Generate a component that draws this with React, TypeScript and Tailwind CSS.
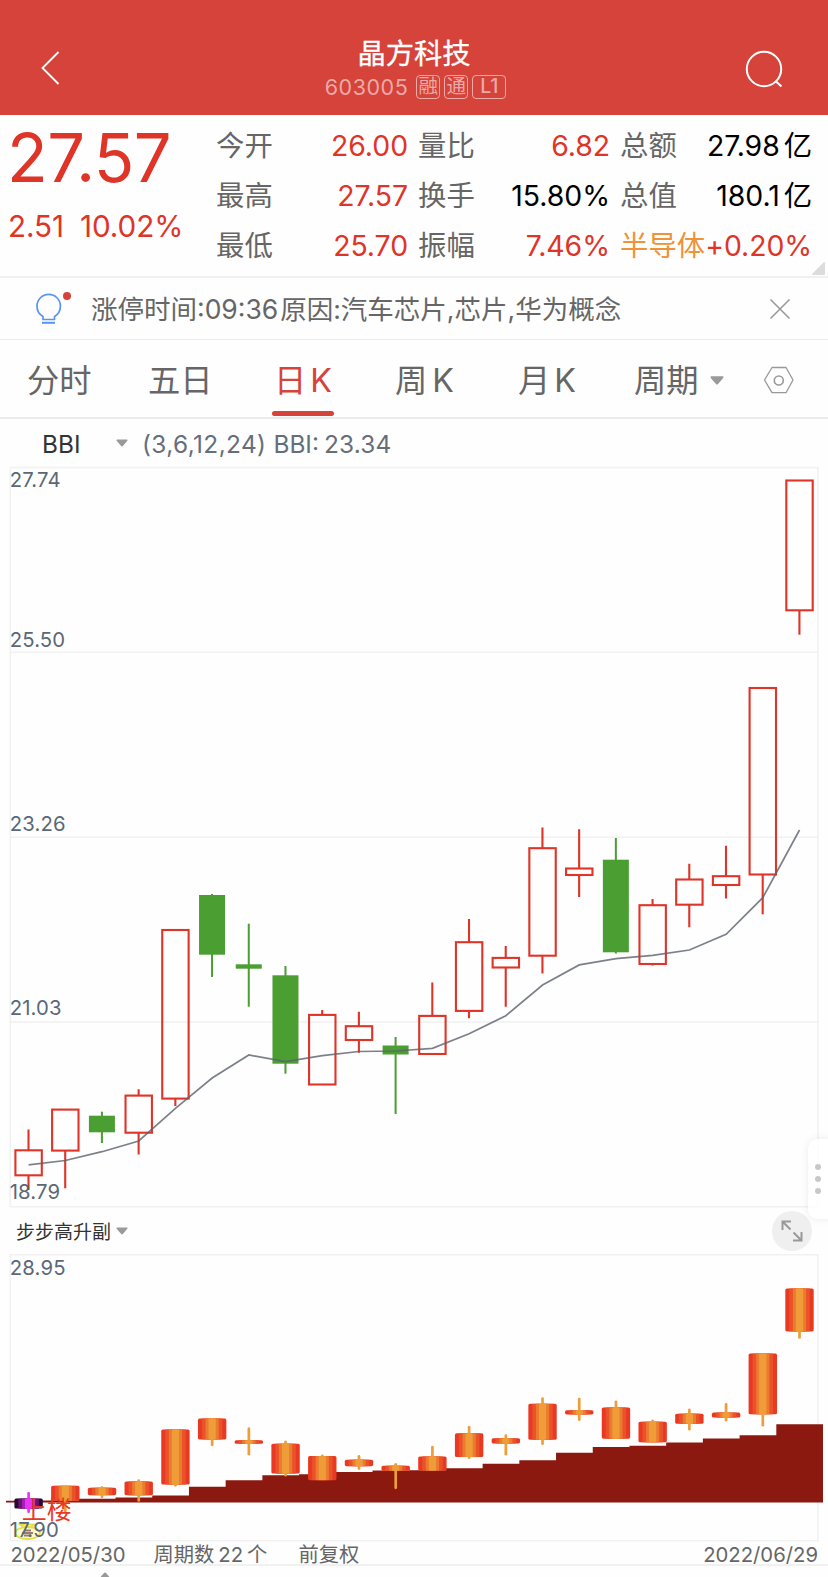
import { type ReactNode } from "react";
import clsx from "clsx";

interface Candle {
  high: number;
  top: number;
  bottom: number;
  low: number;
  down?: boolean;
}

interface StatProps {
  label: string;
  value: string;
  unit?: string;
  labelClass?: string;
  valueClass?: string;
}

const FONT = "font-['Inter','Noto_Sans_CJK_SC',sans-serif]";

const STEP = 36.71;
const FIRST_X = 28.6;

// Plot coordinates of the daily candles
const candles: Candle[] = [
  { high: 1129.6, top: 1150.3, bottom: 1175.3, low: 1190 },
  { high: 1109.6, top: 1109.6, bottom: 1150.6, low: 1188.3 },
  { high: 1111.7, top: 1115.7, bottom: 1132.3, low: 1143, down: true },
  { high: 1089.3, top: 1095.6, bottom: 1132.7, low: 1154.5 },
  { high: 930, top: 930, bottom: 1098.6, low: 1106 },
  { high: 894, top: 895, bottom: 954.7, low: 977, down: true },
  { high: 923.7, top: 964.3, bottom: 968.7, low: 1006.7, down: true },
  { high: 966, top: 975.3, bottom: 1063.7, low: 1073.7, down: true },
  { high: 1010, top: 1014.9, bottom: 1084.5, low: 1084.5 },
  { high: 1011.7, top: 1026.2, bottom: 1040, low: 1052.7 },
  { high: 1037, top: 1045.5, bottom: 1054.5, low: 1114, down: true },
  { high: 982.5, top: 1015.9, bottom: 1054, low: 1054 },
  { high: 918.9, top: 942.2, bottom: 1010.9, low: 1018.3 },
  { high: 946, top: 957.9, bottom: 967.5, low: 1006.7 },
  { high: 827.5, top: 848.2, bottom: 955.7, low: 973.5 },
  { high: 829.2, top: 868.5, bottom: 875, low: 896.9 },
  { high: 838, top: 859.7, bottom: 952.3, low: 953.5, down: true },
  { high: 899, top: 905.2, bottom: 964, low: 965.5 },
  { high: 863.7, top: 879.5, bottom: 904.7, low: 927.3 },
  { high: 845.7, top: 876.2, bottom: 885, low: 898.5 },
  { high: 688, top: 688, bottom: 874.5, low: 914.3 },
  { high: 480.5, top: 480.5, bottom: 610.3, low: 634.7 },
];

const bbi = [
  1164.9, 1160.5, 1151.7, 1141, 1108.3, 1078, 1055, 1061.7, 1055.7, 1051.5, 1051,
  1048.3, 1033.7, 1015.7, 985, 964.9, 958.7, 955.3, 950, 934.3, 897.7, 830,
];

const stairs = [
  1500.7, 1500.5, 1498.7, 1497.5, 1495.5, 1486.7, 1480.3, 1475.2, 1474.3, 1472,
  1470.5, 1470.3, 1468.2, 1463.7, 1460.2, 1452.8, 1447, 1445.7, 1442.5, 1438.6,
  1435.2, 1424.3,
];

const axis = [
  { label: "27.74", y: 487 },
  { label: "25.50", y: 647 },
  { label: "23.26", y: 831 },
  { label: "21.03", y: 1015 },
  { label: "18.79", y: 1199 },
];

const warm = ["#eb3823", "#e9532a", "#ec7a31", "#ef9d38"];
const violet = ["#2a0630", "#6a1478", "#a41fb4", "#ea33f7"];

const candleX = (i: number) => FIRST_X + STEP * i;
const toSub = (y: number) => 1285.6 + (y - 467.5) * 0.31368;

function Stat({ label, value, unit, labelClass, valueClass }: StatProps) {
  return (
    <div className="flex h-[50px] items-center justify-between whitespace-nowrap text-[28.4px] leading-[50px]">
      <span className={labelClass ?? "text-[#666]"}>{label}</span>
      <span className={clsx("tracking-[-0.05px]", valueClass ?? "text-[#df3428]")}>
        {value}
        {unit && <span className="ml-1">{unit}</span>}
      </span>
    </div>
  );
}

function Badge({ children, className }: { children: ReactNode; className?: string }) {
  return (
    <span
      className={clsx(
        "flex h-6 items-center justify-center rounded-[4px] border border-[#ebaaa6] text-[19.5px] leading-none",
        className,
      )}
    >
      {children}
    </span>
  );
}

function Header() {
  return (
    <header className="flex h-[115px] justify-between bg-[#d6433b] text-white">
      <svg className="mt-[50px] ml-10" width="22" height="36" fill="none" stroke="currentColor" strokeWidth="1.8">
        <path d="M18.5 2 L2.5 18 L18.5 34" />
      </svg>
      <div className="ml-[25px] flex flex-col items-center">
        <h1 className="mt-[34px] mr-[3px] text-[28.3px] leading-10 [-webkit-text-stroke:0.3px_currentColor]">
          晶方科技
        </h1>
        <div className="mt-[1px] flex h-6 items-center gap-1 text-[#ebaaa6]">
          <span className="mr-[4px] text-[21.5px] tracking-[0.55px]">603005</span>
          <Badge className="w-6">融</Badge>
          <Badge className="w-6">通</Badge>
          <Badge className="w-[34px] font-medium">L1</Badge>
        </div>
      </div>
      <svg className="mt-[50px] mr-[44px]" width="40" height="40" fill="none" stroke="currentColor" strokeWidth="2">
        <circle cx="20" cy="19" r="17.2" />
        <path d="M31.5 31 L37.5 36.5" />
      </svg>
    </header>
  );
}

function Quote() {
  return (
    <section className="relative flex h-[163px] border-b-2 border-[#f0f0f0] pt-[6px]">
      <div className="w-[216px] pl-[7px] whitespace-nowrap text-[#df3428]">
        <div className="text-[66.8px] leading-[74px] tracking-[-0.6px]">27.57</div>
        <div className="mt-[7px] ml-[1px] flex gap-[16px] text-[29.7px] leading-[48px] tracking-[-0.1px]">
          <span>2.51</span>
          <span>10.02%</span>
        </div>
      </div>
      <div className="w-[192px]">
        <Stat label="今开" value="26.00" />
        <Stat label="最高" value="27.57" />
        <Stat label="最低" value="25.70" />
      </div>
      <div className="ml-[10px] w-[192px]">
        <Stat label="量比" value="6.82" />
        <Stat label="换手" value="15.80%" valueClass="text-black" />
        <Stat label="振幅" value="7.46%" />
      </div>
      <div className="ml-[10px] w-[192px]">
        <Stat label="总额" value="27.98" unit="亿" valueClass="text-black" />
        <Stat label="总值" value="180.1" unit="亿" valueClass="text-black" />
        <Stat label="半导体" value="+0.20%" labelClass="text-[#ee9338]" />
      </div>
      <svg className="absolute right-[3px] bottom-0" width="13" height="14">
        <path d="M12 0 Q13 0 13 1 V12 Q13 13 12 13 H1 Q-1 13 1 11 Z" fill="#dcdcdc" />
      </svg>
    </section>
  );
}

function Notice() {
  return (
    <section className="flex h-[62px] items-center border-b border-[#ebebeb] pl-[34px]">
      <svg className="mt-1" width="40" height="40" fill="none" stroke="#5a93f5" strokeWidth="1.7">
        <path
          d="M9 28.5 V25.5 C5.5 23.5 3 19.5 3 15 A11.7 11.7 0 0 1 26.4 15 C26.4 19.5 24 23.5 20.5 25.5 V28.5 Z"
          strokeLinejoin="round"
        />
        <path d="M8 31.8 H21" strokeWidth="2" />
        <circle cx="33" cy="5" r="4" fill="#d6433b" stroke="none" />
      </svg>
      <p className="ml-[17px] pt-[1px] text-[26.5px] leading-[60px] whitespace-nowrap text-[#666]">
        涨停时间:09:36<span className="ml-[2px]">原因:汽车芯片,芯片,华为概念</span>
      </p>
      <svg className="mr-[37px] ml-auto" width="22" height="22" stroke="#999" strokeWidth="1.6">
        <path d="M1.5 1.5 L20.5 20.5 M20.5 1.5 L1.5 20.5" />
      </svg>
    </section>
  );
}

function Caret({ className }: { className?: string }) {
  return (
    <svg className={className} width="14" height="9" viewBox="0 0 14 9" fill="#999">
      <path d="M1.2 0.3 H12.8 Q14 0.5 13.2 2 L8 8 Q7 9 6 8 L0.8 2 Q0 0.5 1.2 0.3 Z" />
    </svg>
  );
}

function Tabs() {
  return (
    <nav className="flex h-[79px] border-b-2 border-[#ebebeb] text-[32.3px] leading-[81px] whitespace-nowrap text-[#666]">
      <span className="ml-[27px] w-[121px]">分时</span>
      <span className="w-[124px]">五日</span>
      <span className="relative flex w-[62px] justify-center gap-[4px] text-[#d6433b]">
        日<span>K</span>
        <span className="absolute bottom-[1px] left-0 h-[5px] w-[62px] rounded-full bg-[#d6433b]" />
      </span>
      <span className="ml-[61px] flex w-[123px] gap-[5px]">
        周<span>K</span>
      </span>
      <span className="flex w-[115px] gap-[4px]">
        月<span>K</span>
      </span>
      <span className="ml-[1px]">周期</span>
      <Caret className="mt-[36px] ml-[11px]" />
      <svg className="mt-[26px] ml-[39px]" width="32" height="30" fill="none" stroke="#999" strokeWidth="1.3">
        <path d="M9 1.5 H23 L30 14 L23 26.7 H9 L1.5 14 Z" strokeLinejoin="round" />
        <circle cx="15.8" cy="14.5" r="4.5" strokeWidth="1.6" />
      </svg>
    </nav>
  );
}

function MainChart() {
  return (
    <svg className="block" width="828" height="745" viewBox="0 464 828 745">
      <g stroke="#f1f1f2" strokeWidth="1.5" fill="none">
        <rect x="10.3" y="467.5" width="807.7" height="739.3" />
        {[652.3, 837.2, 1022].map((y) => (
          <path key={y} d={`M10 ${y} H818`} />
        ))}
      </g>
      {candles.map(({ high, top, bottom, low, down }, i) => {
        const x = candleX(i);
        return down ? (
          <g key={i} fill="#4a9e32">
            <rect x={x - 1.1} y={high} width="2" height={low - high} />
            <rect x={x - 13.1} y={top} width="26" height={bottom - top} />
          </g>
        ) : (
          <g key={i} fill="none" stroke="#df3428" strokeWidth="2.1">
            <rect x={x - 13.2} y={top} width="26.4" height={bottom - top} />
            <path d={`M${x - 0.1} ${high} V${top} M${x - 0.1} ${bottom} V${low}`} />
          </g>
        );
      })}
      <polyline
        points={bbi.map((y, i) => `${candleX(i)},${y}`).join(" ")}
        fill="none"
        stroke="#5b616c"
        strokeOpacity="0.8"
        strokeWidth="1.7"
      />
      <g fill="#5a6877" fontSize="20.3" letterSpacing="0.15">
        {axis.map(({ label, y }) => (
          <text key={label} x="9.7" y={y}>
            {label}
          </text>
        ))}
      </g>
    </svg>
  );
}

function SubChart() {
  const area = stairs
    .map((y, k) => `V${y} H${k === stairs.length - 1 ? 823 : 5.4 + STEP * (k + 1)}`)
    .join(" ");

  return (
    <svg className="block" width="828" height="291" viewBox="0 1252 828 291">
      <rect x="10.3" y="1254.7" width="807.7" height="286" fill="none" stroke="#f1f1f2" strokeWidth="1.5" />
      <path d={`M6 1502.5 ${area} V1502.5 Z`} fill="#8b1910" />
      {candles.map(({ high, top, bottom, low }, i) => {
        const x = candleX(i);
        const shades = i === 0 ? violet : warm;
        const y0 = toSub(top) - 1.2;
        const y1 = toSub(bottom) + 1;
        return (
          <g key={i}>
            <rect x={x - 14.2} y={y0} width="28.4" height={y1 - y0} rx="1.6" fill={shades[0]} />
            <rect x={x - 10.2} y={y0} width="20.4" height={y1 - y0} fill={shades[1]} />
            <rect x={x - 6.6} y={y0} width="13.2" height={y1 - y0} fill={shades[2]} />
            <rect x={x - 3.6} y={y0} width="7.2" height={y1 - y0} fill={shades[3]} />
            <path
              d={`M${x} ${toSub(high)} V${toSub(low) - 0.6}`}
              stroke={shades[3]}
              strokeWidth="2.7"
              strokeLinecap="round"
            />
          </g>
        );
      })}
      <text x="21.8" y="1519" fontSize="25" fill="#eb3823">
        上楼
      </text>
      {/* Money bag marker */}
      <g fill="#fdfad0" stroke="#e3df4a" strokeWidth="1.8">
        <path d="M20 1524.5 H35 L31 1527 H24 Z" />
        <ellipse cx="27.5" cy="1533" rx="12.5" ry="6" />
        <path d="M22 1533 H33 M24 1530.5 H31 M24 1535.5 H31" stroke="#9a7b70" />
      </g>
      <g fill="#5a6877" fontSize="20.3">
        <text x="9.7" y="1274.5" letterSpacing="0.2">28.95</text>
        <text x="9.7" y="1536.5" letterSpacing="0.2">17.90</text>
      </g>
    </svg>
  );
}

export default function App() {
  return (
    <main className={clsx("relative h-[1577px] w-[828px] overflow-hidden bg-[#fefefe]", FONT)}>
      <Header />
      <Quote />
      <Notice />
      <Tabs />

      <div className="flex h-[45px] items-center pt-[6px] text-[24.4px] leading-[39px] whitespace-nowrap text-[#666e7a]">
        <span className="ml-[42px] w-[74px] text-[#333]">BBI</span>
        <Caret className="mb-[3px] h-[8px] w-[12px]" />
        <span className="ml-[14px] tracking-[0.4px]">(3,6,12,24)</span>
        <span className="ml-[7px]">BBI:</span>
        <span className="ml-[5px] tracking-[0.2px]">23.34</span>
      </div>

      <MainChart />

      <div className="flex h-[43px] items-center pr-[16px] pl-4">
        <span className="pt-[4px] text-[19px] leading-[39px] text-[#333]">步步高升副</span>
        <Caret className="mt-[1px] ml-[5px] h-[8px] w-[12px]" />
        <span className="ml-auto flex size-10 items-center justify-center rounded-full bg-[#efefef]">
          <svg width="22" height="22" fill="none" stroke="#999" strokeWidth="2">
            <path d="M1.5 10 V1.5 H10 M1.5 1.5 L9.5 9.5 M20.5 12 V20.5 H12 M20.5 20.5 L12.5 12.5" />
          </svg>
        </span>
      </div>

      <SubChart />

      <footer className="flex h-[23px] items-center border-b-2 border-[#f1f1f1] pt-[3px] pr-[10px] pl-[10.5px] text-[20.3px] leading-[20px] whitespace-nowrap text-[#666]">
        <span className="w-[143px]">2022/05/30</span>
        <span className="flex w-[145px] gap-[4px]">
          周期数<span>22</span>
          <span>个</span>
        </span>
        <span>前复权</span>
        <span className="ml-auto">2022/06/29</span>
      </footer>
      <Caret className="mt-[6px] ml-[98px] rotate-180" />

      {/* Side drawer handle */}
      <div className="absolute top-[1139px] right-[-12px] flex h-20 w-8 flex-col items-center justify-center gap-[5.5px] rounded-[10px] bg-white/80 pr-3 shadow-[0_0_8px_rgba(0,0,0,0.08)]">
        <span className="size-[6.5px] rounded-full bg-[#c8c8c8]" />
        <span className="size-[6.5px] rounded-full bg-[#c8c8c8]" />
        <span className="size-[6.5px] rounded-full bg-[#c8c8c8]" />
      </div>
    </main>
  );
}
